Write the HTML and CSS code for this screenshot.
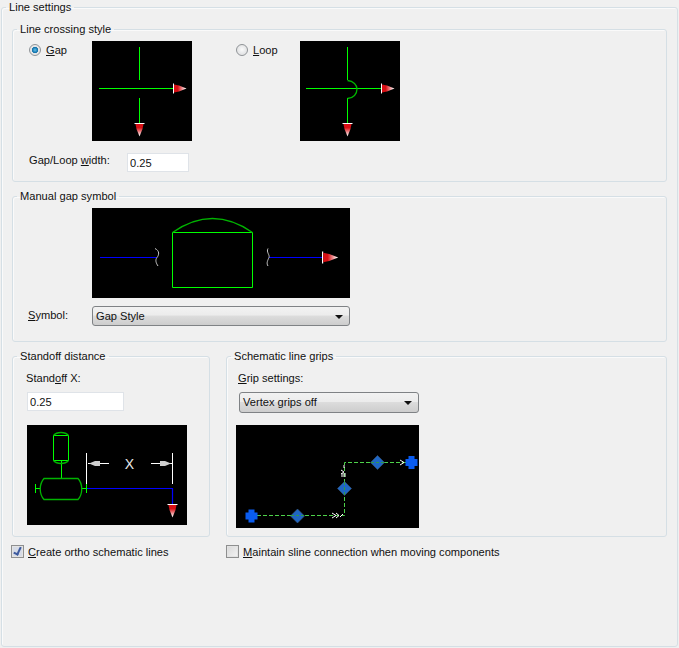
FILE: index.html
```html
<!DOCTYPE html>
<html lang="en">
<head>
  <meta charset="UTF-8">
  <title>Line settings</title>
  <link rel="stylesheet" href="styles.css">
</head>
<body>
  <fieldset class="group outer">
    <legend>Line settings</legend>
    <div class="outer-body">

      <fieldset class="group crossing">
        <legend>Line crossing style</legend>
        <div class="crossing-body">
          <div class="crossing-row">
            <label class="radio-item gap-item">
              <span class="radio checked"></span>
              <span><u>G</u>ap</span>
            </label>
            <svg class="preview square" viewBox="0 0 100 100">
              <path class="green" d="M47.5 6V39M47.5 57V82M7 47.5H81"/>
              <use href="#arrowRight" x="81" y="47.5"/>
              <use href="#arrowDown" x="47.5" y="82"/>
            </svg>
            <label class="radio-item loop-item">
              <span class="radio"></span>
              <span><u>L</u>oop</span>
            </label>
            <svg class="preview square" viewBox="0 0 100 100">
              <path class="green" d="M47.5 6V39M47.5 57V82M6 47.5H81"/>
              <path class="green arc" d="M47.5 39.5C53.5 40 57 44 57 48C57 53 53.5 57 47.5 57.5"/>
              <use href="#arrowRight" x="81" y="47.5"/>
              <use href="#arrowDown" x="47.5" y="82"/>
            </svg>
          </div>
          <div class="field-row width-row">
            <label class="field-label">Gap/Loop <u>w</u>idth:</label>
            <input class="text-box width-box" type="text" value="0.25">
          </div>
        </div>
      </fieldset>

      <fieldset class="group manual">
        <legend>Manual gap symbol</legend>
        <div class="manual-body">
          <svg class="preview gap-preview" viewBox="0 0 258 90">
            <path class="blue" d="M8 49.5H65M177 49.5H230"/>
            <path class="wave" d="M63 40.5C68 43 67 47 65 49.5C63 52 64 55 66 58M176 40.5C174 44 178 47 177 49.5C176 52 174 55 176 58"/>
            <path class="green" d="M80.5 24.5H160.5V79.5H80.5Z"/>
            <path class="green arc" d="M80.5 24.5Q120.5 -3.5 160.5 24.5"/>
            <use href="#arrowRight" transform="translate(230 49.5) scale(1.2)"/>
          </svg>
          <div class="field-row symbol-row">
            <label class="field-label"><u>S</u>ymbol:</label>
            <div class="combo symbol-combo">Gap Style</div>
          </div>
        </div>
      </fieldset>

      <div class="lower-row">
        <fieldset class="group standoff">
          <legend>Standoff distance</legend>
          <div class="standoff-body">
            <label class="stack-label">Stand<u>o</u>ff X:</label>
            <input class="text-box standoff-box" type="text" value="0.25">
            <svg class="preview standoff-preview" viewBox="0 0 160 100">
              <path class="green" d="M26.5 10.5H41.5V35.5H26.5ZM34.5 36V53.5M8.5 59V68M9 63.5H13M55 63.5H60"/>
              <path class="green arc" d="M26.5 10.5C30 6.5 38 6.5 41.5 10.5M26.5 35.5C30 39.5 38 39.5 41.5 35.5M17 53.5H51C56 59 56 69 51 74.5H17C12 69 12 59 17 53.5Z"/>
              <path class="white" d="M59.5 28V59M145.5 28V59M61 38.5H82M124 38.5H145"/>
              <path class="green" d="M59.5 59V68"/>
              <path class="arrowhead" d="M62 38.5L68 36H73V41H68ZM144 38.5L138 36H133V41H138Z"/>
              <text class="x-mark" x="102.5" y="43.5">X</text>
              <path class="blue wide" d="M60 63.5H145.5V79"/>
              <use href="#arrowDown" x="145.5" y="79"/>
            </svg>
          </div>
        </fieldset>

        <fieldset class="group grips">
          <legend>Schematic line grips</legend>
          <div class="grips-body">
            <label class="stack-label"><u>G</u>rip settings:</label>
            <div class="combo grip-combo">Vertex grips off</div>
            <svg class="preview grip-preview" viewBox="0 0 183 103">
              <path class="dash" d="M21 90.5H108.5V37.5H170"/>
              <path class="grip-plus" d="M12.5 84.5H18.5V87.5H21.5V94.5H18.5V97.5H12.5V94.5H9.5V87.5H12.5Z"/>
              <path class="grip-plus" d="M172.5 31H178.5V34H181.5V41H178.5V44H172.5V41H169.5V34H172.5Z"/>
              <path class="grip-diamond" d="M61.5 84L68.5 91L61.5 98L54.5 91Z"/>
              <path class="grip-diamond" d="M108.5 56.5L115.5 63.5L108.5 70.5L101.5 63.5Z"/>
              <path class="grip-diamond" d="M141.5 30.5L148.5 37.5L141.5 44.5L134.5 37.5Z"/>
              <path class="dash inner" d="M55 90.5H68M108.5 57V70M135 37.5H148"/>
              <path class="mark" d="M96 88L100 90.5L96 93M100 88L103 90.5L100 93M104 92L107 89M108 40V43M105 45L108 47L105 49H110M105 51H110M164 35L168 37.5L164 40"/>
            </svg>
          </div>
        </fieldset>
      </div>

      <div class="check-row">
        <label class="check-item ortho-item"><span class="checkbox checked"></span><span><u>C</u>reate ortho schematic lines</span></label>
        <label class="check-item"><span class="checkbox"></span><span><u>M</u>aintain sline connection when moving components</span></label>
      </div>
    </div>
  </fieldset>

  <svg class="defs" width="0" height="0">
    <defs>
      <linearGradient id="fadeRight"><stop offset="0.3" stop-color="#d80f14"/><stop offset="0.95" stop-color="#fff"/></linearGradient>
      <linearGradient id="fadeDown" x2="0" y2="1"><stop offset="0.3" stop-color="#d80f14"/><stop offset="0.95" stop-color="#fff"/></linearGradient>
      <g id="arrowRight">
        <path d="M0.5 -5V5" stroke="#fff" stroke-width="1"/>
        <path d="M1 -4L6 -3L13.5 0L6 3L1 4Z" fill="url(#fadeRight)"/>
      </g>
      <g id="arrowDown">
        <path d="M-5 0.5H5" stroke="#fff" stroke-width="1"/>
        <path d="M-4 1L-3 6L0 13.5L3 6L4 1Z" fill="url(#fadeDown)"/>
      </g>
    </defs>
  </svg>
</body>
</html>
```

FILE: styles.css
```css
html, body {
  margin: 0;
  height: 100%;
}

body {
  background-color: #f0f0f0;
  font-family: "Liberation Sans", Arial, sans-serif;
  font-size: 11.1px;
  color: #111;
  overflow: hidden;
}

.defs {
  position: absolute;
}

.group {
  margin: 0;
  padding: 0;
  border: 1px solid #d5dfe5;
  border-radius: 3px;
  min-width: 0;
  box-sizing: border-box;
  box-shadow: inset 1px 1px 0 #fafafa;
}

.group legend {
  padding: 0 3px;
  margin-left: 4px;
  line-height: 14px;
}

.outer {
  margin-left: 1px;
  width: 677px;
  height: 647px;
}

.outer-body {
  padding: 8px 10px 0;
}

.crossing {
  height: 160px;
}

.crossing-body {
  padding: 5px 0 0 16px;
}

.crossing-row {
  display: flex;
  align-items: flex-start;
}

.preview {
  display: block;
  background-color: #000;
  flex: none;
}

.square {
  width: 100px;
  height: 100px;
}

.radio-item {
  display: flex;
  align-items: center;
  gap: 5px;
  height: 16px;
  margin-top: 1px;
}

.gap-item {
  width: 63px;
}

.loop-item {
  width: 64px;
  margin-left: 44px;
}

.radio {
  box-sizing: border-box;
  width: 12px;
  height: 12px;
  border-radius: 50%;
  border: 1px solid #8f9397;
  background: radial-gradient(circle at 50% 45%, #fbfbfb, #d5d7da);
  box-shadow: inset 0 0 0 1px #e8e8e8;
}

.radio.checked {
  background: radial-gradient(circle at 50% 50%, #5fc0ea 0, #0d6ea8 40%, #e2e4e6 50%);
}

.field-row {
  display: flex;
  align-items: flex-start;
}

.field-label {
  display: block;
  flex: none;
}

.width-row {
  margin-top: 12px;
}

.width-row .field-label {
  width: 98px;
  padding-top: 1px;
}

.text-box {
  display: block;
  box-sizing: border-box;
  height: 19px;
  padding: 1px 2px;
  border: 1px solid #dfe3e8;
  background-color: #fff;
  font: inherit;
  color: #111;
}

.width-box {
  width: 62px;
}

.manual {
  margin-top: 7px;
  height: 153px;
}

.manual-body {
  padding: 5px 0 0 79px;
}

.gap-preview {
  width: 258px;
  height: 90px;
}

.symbol-row {
  margin: 8px 0 0 -64px;
}

.symbol-row .field-label {
  width: 64px;
  padding-top: 3px;
}

.combo {
  box-sizing: border-box;
  line-height: 18px;
  padding-left: 3px;
  border: 1px solid #7f8285;
  border-radius: 3px;
  background: linear-gradient(#f2f2f2 0, #ececec 45%, #dcdcdc 50%, #cdcdcd 100%);
  position: relative;
}

.combo::after {
  content: "";
  position: absolute;
  right: 6px;
  top: 8px;
  border-left: 4px solid transparent;
  border-right: 4px solid transparent;
  border-top: 4px solid #111;
}

.symbol-combo {
  width: 258px;
  height: 20px;
}

.lower-row {
  display: flex;
  gap: 16px;
  margin-top: 7px;
}

.standoff, .grips {
  height: 188px;
}

.standoff {
  width: 198px;
}

.standoff-body {
  padding: 8px 0 0 14px;
}

.grips {
  flex: 1;
}

.grips-body {
  padding: 8px 0 0 9px;
}

.stack-label {
  display: block;
  line-height: 14px;
  margin-left: -1px;
}

.standoff-box {
  width: 97px;
  margin-top: 7px;
}

.standoff-preview {
  width: 160px;
  height: 100px;
  margin-top: 14px;
}

.grips .stack-label {
  margin-left: 2px;
}

.grip-combo {
  width: 180px;
  height: 21px;
  line-height: 19px;
  margin: 7px 0 0 3px;
}

.grip-preview {
  width: 183px;
  height: 103px;
  margin-top: 12px;
}

.green, .blue, .white, .wave, .dash, .mark {
  fill: none;
  stroke-width: 1;
}

.green {
  stroke: #00ff00;
}

.green.arc {
  stroke: #00b400;
  stroke-width: 1.3;
}

.blue {
  stroke: #0000ff;
}

.blue.wide {
  stroke-width: 1.2;
}

.white {
  stroke: #fff;
}

.wave {
  stroke: #c8c8c8;
}

.arrowhead {
  fill: #cfcfcf;
}

.x-mark {
  fill: #e8e8e8;
  font-size: 14px;
  text-anchor: middle;
}

.dash {
  stroke: #4ed24a;
  stroke-dasharray: 4 2;
}

.dash.inner {
  stroke: #2f9a46;
  stroke-dasharray: 3 2;
}

.mark {
  stroke: #fff;
}

.grip-plus {
  fill: #0a5cf0;
}

.grip-diamond {
  fill: #1f66c4;
  stroke: #3b5878;
  stroke-width: 0.6;
}

.check-row {
  display: flex;
  margin: 7px 0 0 -1px;
}

.check-item {
  display: flex;
  align-items: center;
  gap: 4px;
  height: 15px;
}

.ortho-item {
  width: 215px;
}

.checkbox {
  box-sizing: border-box;
  width: 13px;
  height: 13px;
  border: 1px solid #8e8f8f;
  background: linear-gradient(135deg, #d8d8d8, #f4f4f4);
  box-shadow: inset 0 0 0 1px #e3e3e3;
}

.checkbox.checked {
  background: #d6dbe6;
  position: relative;
}

.checkbox.checked::after {
  content: "";
  position: absolute;
  left: 3px;
  top: 0;
  width: 3px;
  height: 7px;
  border: solid #3d5a9e;
  border-width: 0 2px 2px 0;
  transform: rotate(25deg);
}
```
